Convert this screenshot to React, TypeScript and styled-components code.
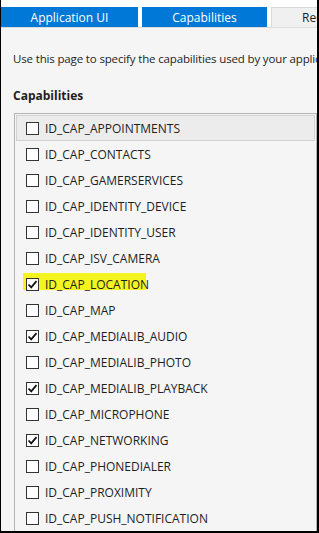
import React from "react";
import styled, { createGlobalStyle } from "styled-components";

const Global = createGlobalStyle`
  html, body { margin: 0; padding: 0; background: #ffffff; }
  body { font-family: "Segoe UI", "Open Sans", "Noto Sans", sans-serif; }
`;

const Frame = styled.div`
  width: 316px;
  height: 531px;
  border-left: 1px solid #000;
  border-right: 2px solid #000;
  border-bottom: 2px solid #000;
  background: #f5f5f5;
  overflow: hidden;
  display: flex;
  flex-direction: column;
`;

const TabBar = styled.div`
  display: flex;
  gap: 4px;
  padding-top: 7px;
  background: #ffffff;
  border-bottom: 1px solid #dcdcdc;
  height: 25px;
  white-space: nowrap;
`;

const Tab = styled.div<{ $active?: boolean; $w: number }>`
  flex: 0 0 ${(p) => p.$w}px;
  display: flex;
  align-items: center;
  justify-content: ${(p) => (p.$active ? "center" : "flex-start")};
  padding-left: ${(p) => (p.$active ? 0 : 30)}px;
  box-sizing: border-box;
  background: ${(p) => (p.$active ? "#0078d7" : "#f0f0f0")};
  color: ${(p) => (p.$active ? "#ffffff" : "#1e1e1e")};
  font-size: 12px;
  border: ${(p) => (p.$active ? "none" : "1px solid #dadada")};
  border-bottom: none;
`;

const Content = styled.div`
  padding: 23px 0 0 12px;
  display: flex;
  flex-direction: column;
  font-size: 12px;
  color: #1e1e1e;
`;

const Description = styled.div`
  white-space: nowrap;
  height: 16px;
  line-height: 16px;
  font-size: 11.5px;
  letter-spacing: -0.15px;
`;

const Heading = styled.div`
  font-weight: bold;
  margin-top: 21px;
  height: 16px;
  line-height: 16px;
`;

const ListBox = styled.div`
  margin-top: 9px;
  margin-left: 1px;
  width: 299px;
  border: 1px solid #b4b4b4;
  border-bottom: none;
  padding: 1px 1px 0 1px;
  display: flex;
  flex-direction: column;
`;

const Row = styled.div<{ $selected?: boolean }>`
  height: 26px;
  box-sizing: border-box;
  display: flex;
  align-items: center;
  padding-left: 9px;
  background: ${(p) => (p.$selected ? "#ececec" : "transparent")};
  border: 1px solid ${(p) => (p.$selected ? "#d2d2d2" : "transparent")};
`;

const Item = styled.div`
  position: relative;
  display: flex;
  align-items: center;
  gap: 6px;
  height: 22px;
`;

const Marker = styled.div`
  position: absolute;
  left: -3px;
  right: 3px;
  top: 0;
  height: 17px;
  background: #f4f421;
`;

const Box = styled.div`
  position: relative;
  width: 13px;
  height: 13px;
  box-sizing: border-box;
  border: 1px solid #333333;
  background: #ffffff;
  display: flex;
  align-items: center;
  justify-content: center;
`;

const Label = styled.span`
  position: relative;
  font-size: 12px;
  color: #1e1e1e;
  white-space: nowrap;
`;

const Check = () => (
  <svg width="11" height="11" viewBox="0 0 11 11">
    <path d="M1.5 5.5 L4.2 8.3 L9.5 2.2" fill="none" stroke="#111" strokeWidth="1.8" />
  </svg>
);

const items: { name: string; checked?: boolean; hl?: boolean }[] = [
  { name: "ID_CAP_APPOINTMENTS" },
  { name: "ID_CAP_CONTACTS" },
  { name: "ID_CAP_GAMERSERVICES" },
  { name: "ID_CAP_IDENTITY_DEVICE" },
  { name: "ID_CAP_IDENTITY_USER" },
  { name: "ID_CAP_ISV_CAMERA" },
  { name: "ID_CAP_LOCATION", checked: true, hl: true },
  { name: "ID_CAP_MAP" },
  { name: "ID_CAP_MEDIALIB_AUDIO", checked: true },
  { name: "ID_CAP_MEDIALIB_PHOTO" },
  { name: "ID_CAP_MEDIALIB_PLAYBACK", checked: true },
  { name: "ID_CAP_MICROPHONE" },
  { name: "ID_CAP_NETWORKING", checked: true },
  { name: "ID_CAP_PHONEDIALER" },
  { name: "ID_CAP_PROXIMITY" },
  { name: "ID_CAP_PUSH_NOTIFICATION" },
];

export default function App() {
  return (
    <Frame>
      <Global />
      <TabBar>
        <Tab $active $w={137}>Application UI</Tab>
        <Tab $active $w={125}>Capabilities</Tab>
        <Tab $w={60}>Requirements</Tab>
      </TabBar>
      <Content>
        <Description>Use this page to specify the capabilities used by your application.</Description>
        <Heading>Capabilities</Heading>
        <ListBox>
          {items.map((it, i) => (
            <Row key={it.name} $selected={i === 0}>
              <Item>
                {it.hl && <Marker />}
                <Box>{it.checked && <Check />}</Box>
                <Label>{it.name}</Label>
              </Item>
            </Row>
          ))}
        </ListBox>
      </Content>
    </Frame>
  );
}
